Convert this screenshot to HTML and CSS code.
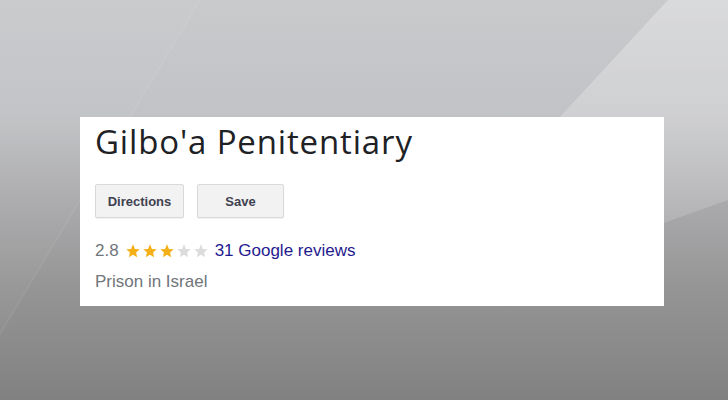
FILE: index.html
```html
<!DOCTYPE html>
<html>
<head>
<meta charset="utf-8">
<link rel="stylesheet" href="styles.css">
</head>
<body>
<div class="stage">
  <div class="card">
    <h1 class="title">Gilbo'a Penitentiary</h1>
    <div class="actions">
      <button class="btn btn-dir">Directions</button>
      <button class="btn btn-save">Save</button>
    </div>
    <div class="rating">
      <span class="score">2.8</span>
      <span class="stars">
        <svg class="star on" viewBox="0 0 24 24"><path d="M12 2l2.9 6.9 7.1.6-5.4 4.7 1.6 7.3L12 17.7l-6.2 3.8 1.6-7.3L2 9.5l7.1-.6z"/></svg>
        <svg class="star on" viewBox="0 0 24 24"><path d="M12 2l2.9 6.9 7.1.6-5.4 4.7 1.6 7.3L12 17.7l-6.2 3.8 1.6-7.3L2 9.5l7.1-.6z"/></svg>
        <svg class="star on" viewBox="0 0 24 24"><path d="M12 2l2.9 6.9 7.1.6-5.4 4.7 1.6 7.3L12 17.7l-6.2 3.8 1.6-7.3L2 9.5l7.1-.6z"/></svg>
        <svg class="star off" viewBox="0 0 24 24"><path d="M12 2l2.9 6.9 7.1.6-5.4 4.7 1.6 7.3L12 17.7l-6.2 3.8 1.6-7.3L2 9.5l7.1-.6z"/></svg>
        <svg class="star off" viewBox="0 0 24 24"><path d="M12 2l2.9 6.9 7.1.6-5.4 4.7 1.6 7.3L12 17.7l-6.2 3.8 1.6-7.3L2 9.5l7.1-.6z"/></svg>
      </span>
      <a class="reviews" href="#">31 Google reviews</a>
    </div>
    <div class="category">Prison in Israel</div>
  </div>
</div>
</body>
</html>
```
FILE: styles.css
```css
html, body {
  margin: 0;
  padding: 0;
}
body {
  width: 728px;
  height: 400px;
  overflow: hidden;
  background-color: #a5a5a6;
  background-image:
    url("data:image/svg+xml,%3Csvg xmlns='http://www.w3.org/2000/svg' width='728' height='400'%3E%3Cdefs%3E%3ClinearGradient id='g' x1='0' y1='0' x2='0' y2='1'%3E%3Cstop offset='0' stop-color='white' stop-opacity='0.3'/%3E%3Cstop offset='1' stop-color='white' stop-opacity='0.12'/%3E%3C/linearGradient%3E%3C/defs%3E%3Cpolygon points='668,0 728,0 728,200 560,260 450,236' fill='url(%23g)'/%3E%3Cpolygon points='0,0 200,0 0,334' fill='white' fill-opacity='0.03'/%3E%3Cline x1='200' y1='0' x2='0' y2='334' stroke='white' stroke-opacity='0.07' stroke-width='1.5'/%3E%3C/svg%3E"),
    linear-gradient(180deg, #c9cacc 0%, #c2c3c6 28%, #ababad 50%, #959596 72%, #818181 100%);
  background-repeat: no-repeat;
  background-size: 728px 400px;
  font-family: Arial, "Liberation Sans", sans-serif;
}
.stage {
  padding: 117px 64px 0 80px;
}
.card {
  width: 584px;
  height: 189px;
  box-sizing: border-box;
  background: #ffffff;
  padding: 5px 15px 0 15px;
}
.title {
  margin: 0;
  font-family: "Open Sans", sans-serif;
  font-weight: 400;
  font-size: 33px;
  line-height: 40px;
  color: #202124;
  letter-spacing: 0.85px;
}
.actions {
  display: flex;
  gap: 13px;
  margin-top: 22px;
}
.btn {
  height: 34px;
  box-sizing: border-box;
  border: 1px solid #d9d9d9;
  border-radius: 2px;
  background: #f2f2f2;
  box-shadow: 0 1px 1px rgba(0,0,0,0.06);
  font-family: Arial, "Liberation Sans", sans-serif;
  font-weight: 700;
  font-size: 13px;
  color: #3f4150;
  padding: 0;
}
.btn-dir { width: 89px; }
.btn-save { width: 87px; }
.rating {
  display: flex;
  align-items: center;
  margin-top: 23px;
  height: 20px;
  line-height: 20px;
}
.score {
  font-size: 17px;
  color: #70757a;
}
.stars {
  display: flex;
  gap: 1px;
  margin-left: 6px;
  margin-right: 6px;
}
.star {
  width: 16px;
  height: 16px;
}
.star.on { fill: #f4b018; }
.star.off { fill: #dcdcdc; }
.reviews {
  font-size: 17px;
  color: #1f1a8f;
  text-decoration: none;
}
.category {
  margin-top: 11px;
  font-size: 17px;
  line-height: 20px;
  color: #70757a;
}
```
